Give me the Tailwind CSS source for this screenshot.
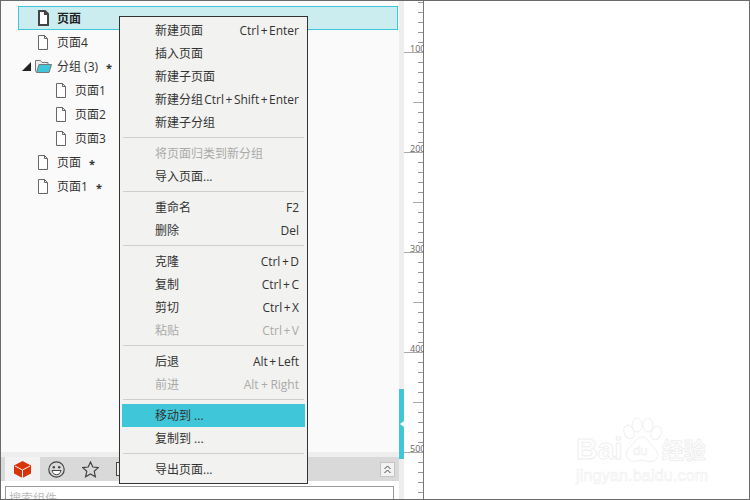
<!DOCTYPE html>
<html lang="zh">
<head>
<meta charset="utf-8">
<script src="https://cdn.jsdelivr.net/npm/@tailwindcss/browser@4"></script>
</head>
<body class="bg-white">
<div class="relative flex w-[750px] h-[500px] overflow-hidden bg-white border border-[#6a6a6a] text-[12px] leading-[18px] text-[#333] font-['Open_Sans','Noto_Sans_CJK_SC',sans-serif]">

  <!-- left panel -->
  <div class="flex flex-col w-[398px] shrink-0 h-full">
    <div class="flex-1 min-h-0 bg-[#fafafa] pt-[5px]">
      <div class="flex items-center h-6 ml-[17px] w-[380px] bg-[#cbedf0] border border-[#3fc6d8] pl-[19px] font-bold text-[#222]">
        <svg class="w-[11px] h-[16px] shrink-0" viewBox="0 0 11 16"><path d="M1 1h6l3 3v11H1z M7 1v3h3" fill="#fff" stroke="#444" stroke-width="2"/></svg>
        <span class="ml-[8px] pt-[2px]">页面</span>
      </div>
      <div class="flex items-center h-6 pl-[37px]">
        <svg class="w-[10px] h-[15px] shrink-0" viewBox="0 0 10 15"><path d="M.5.5h6l3 3v11H.5z M6.500.5v3h3" fill="#fff" stroke="#666"/></svg>
        <span class="ml-[9px] pt-[2px]">页面4</span>
      </div>
      <div class="flex items-center h-6 pl-[21px]">
        <svg class="w-[9px] h-[9px] shrink-0" viewBox="0 0 9 9"><path d="M9 0v9H0z" fill="#222"/></svg>
        <svg class="w-[17px] h-[14px] ml-[4px] shrink-0" viewBox="0 0 17 14"><path d="M.5 12.500V1.500h5l1.500 2h6v2" fill="#eee" stroke="#777"/><path d="M4 5.500h12.500l-2.500 8H1.500z" fill="#3fc6d8" stroke="#777"/></svg>
        <span class="ml-[5px] pt-[2px]">分组 (3)</span><span class="ml-[8px] pt-[3px] text-[11px] font-bold">*</span>
      </div>
      <div class="flex items-center h-6 pl-[55px]">
        <svg class="w-[10px] h-[15px] shrink-0" viewBox="0 0 10 15"><path d="M.5.5h6l3 3v11H.5z M6.500.5v3h3" fill="#fff" stroke="#666"/></svg>
        <span class="ml-[9px] pt-[2px]">页面1</span>
      </div>
      <div class="flex items-center h-6 pl-[55px]">
        <svg class="w-[10px] h-[15px] shrink-0" viewBox="0 0 10 15"><path d="M.5.5h6l3 3v11H.5z M6.500.5v3h3" fill="#fff" stroke="#666"/></svg>
        <span class="ml-[9px] pt-[2px]">页面2</span>
      </div>
      <div class="flex items-center h-6 pl-[55px]">
        <svg class="w-[10px] h-[15px] shrink-0" viewBox="0 0 10 15"><path d="M.5.5h6l3 3v11H.5z M6.500.5v3h3" fill="#fff" stroke="#666"/></svg>
        <span class="ml-[9px] pt-[2px]">页面3</span>
      </div>
      <div class="flex items-center h-6 pl-[37px]">
        <svg class="w-[10px] h-[15px] shrink-0" viewBox="0 0 10 15"><path d="M.5.5h6l3 3v11H.5z M6.500.5v3h3" fill="#fff" stroke="#666"/></svg>
        <span class="ml-[9px] pt-[2px]">页面</span><span class="ml-[8px] pt-[3px] text-[11px] font-bold">*</span>
      </div>
      <div class="flex items-center h-6 pl-[37px]">
        <svg class="w-[10px] h-[15px] shrink-0" viewBox="0 0 10 15"><path d="M.5.5h6l3 3v11H.5z M6.500.5v3h3" fill="#fff" stroke="#666"/></svg>
        <span class="ml-[9px] pt-[2px]">页面1</span><span class="ml-[8px] pt-[3px] text-[11px] font-bold">*</span>
      </div>
    </div>
    <div class="h-[5px] bg-[#eeeeee] shrink-0"></div>
    <div class="flex items-center h-6 bg-[#d9d9d9] pl-[4px] shrink-0">
      <div class="flex items-center justify-center w-[35px] h-6 bg-[#f2f2f2]">
        <svg class="w-[17px] h-[17px]" viewBox="0 0 17 17"><path d="M8.500 0 17 4.500v8L8.500 17 0 12.500v-8z" fill="#d8340a"/><path d="M1 5l7.500 4 7.500-4M8.500 9v8" fill="none" stroke="#f2f2f2" stroke-width="1"/></svg>
      </div>
      <div class="flex items-center justify-center w-[32px] h-6">
        <svg class="w-[17px] h-[17px]" viewBox="0 0 17 17"><circle cx="8.500" cy="8.500" r="7.700" fill="none" stroke="#444" stroke-width="1.200"/><circle cx="5.800" cy="6.200" r="1.200" fill="#444"/><circle cx="11.200" cy="6.200" r="1.200" fill="#444"/><path d="M4 9.500h9c-.5 3-2.500 4.200-4.500 4.200S4.500 12.500 4 9.500z" fill="#fff" stroke="#444"/></svg>
      </div>
      <div class="flex items-center justify-center w-[36px] h-6">
        <svg class="w-[17px] h-[17px]" viewBox="0 0 17 17"><path d="M8.500 1l2.300 5 5.500.6-4.100 3.700 1.200 5.400-4.900-2.800-4.900 2.800 1.200-5.400L.7 6.600 6.200 6z" fill="none" stroke="#444" stroke-width="1.200"/></svg>
      </div>
      <div class="w-[14px] h-[14px] ml-[8px] border border-[#444] bg-[#eee] shrink-0"></div>
      <div class="flex items-center justify-center w-[15px] h-[15px] ml-auto mr-[4px] bg-[#f2f2f2] border border-[#c4c4c4]">
        <svg class="w-[7px] h-[9px]" viewBox="0 0 7 9"><path d="M.5 4 3.500 1l3 3M.5 8l3-3 3 3" fill="none" stroke="#444"/></svg>
      </div>
    </div>
    <div class="flex-none h-[18px] bg-white pt-[5px] pl-[4px] pr-[5px]">
      <div class="h-[30px] border border-[#999] pl-[3px] pt-[3px] text-[#bbb] text-[12px]">搜索组件</div>
    </div>
  </div>

  <!-- splitter strip -->
  <div class="flex flex-col w-[5px] shrink-0 bg-[#eeeeee] pt-[388px]">
    <div class="flex items-center justify-end h-[70px] bg-[#3fc6d8]">
      <div class="w-0 h-0 border-y-[3px] border-y-transparent border-r-[4px] border-r-white"></div>
    </div>
  </div>

  <!-- ruler -->
  <svg class="w-[20px] h-[498px] shrink-0" viewBox="0 1 20 498">
    <defs>
      <pattern id="t" x="0" y="2" width="20" height="10" patternUnits="userSpaceOnUse"><rect x="14" y="0" width="5" height="1" fill="#999"/></pattern>
    </defs>
    <rect width="20" height="500" fill="url(#t)"/>
    <path d="M9 102.500h10M9 202.500h10M9 302.500h10M9 402.500h10" stroke="#aaa"/>
    <path d="M0 52.500h19M0 152.500h19M0 252.500h19M0 352.500h19M0 452.500h19" stroke="#aaa"/>
    <rect x="19" y="0" width="1" height="500" fill="#777"/>
    <g font-family="'Open Sans',sans-serif" font-size="9" fill="#666">
      <text x="6" y="51.500">100</text><text x="6" y="151.500">200</text><text x="6" y="251.500">300</text><text x="6" y="351.500">400</text><text x="6" y="451.500">500</text>
    </g>
  </svg>

  <!-- context menu -->
  <div class="absolute left-[118px] top-[15px] w-[189px] h-[468px] bg-[#f2f2f0] border border-[#333] py-[2px] text-[#333]">
    <div class="flex items-center justify-between h-[23px] pl-[35px] pr-[8px]"><span>新建页面</span><span>Ctrl<span class="mx-[1.5px]">+</span>Enter</span></div>
    <div class="flex items-center justify-between h-[23px] pl-[35px] pr-[8px]"><span>插入页面</span></div>
    <div class="flex items-center justify-between h-[23px] pl-[35px] pr-[8px]"><span>新建子页面</span></div>
    <div class="flex items-center justify-between h-[23px] pl-[35px] pr-[8px]"><span>新建分组</span><span>Ctrl<span class="mx-[1.5px]">+</span>Shift<span class="mx-[1.5px]">+</span>Enter</span></div>
    <div class="flex items-center justify-between h-[23px] pl-[35px] pr-[8px]"><span>新建子分组</span></div>
    <div class="h-[8px] pt-[3px] px-[3px]"><div class="h-px bg-[#cfcfcf]"></div></div>
    <div class="flex items-center justify-between h-[23px] pl-[35px] pr-[8px] text-[#aaa]"><span>将页面归类到新分组</span></div>
    <div class="flex items-center justify-between h-[23px] pl-[35px] pr-[8px]"><span>导入页面...</span></div>
    <div class="h-[8px] pt-[3px] px-[3px]"><div class="h-px bg-[#cfcfcf]"></div></div>
    <div class="flex items-center justify-between h-[23px] pl-[35px] pr-[8px]"><span>重命名</span><span>F2</span></div>
    <div class="flex items-center justify-between h-[23px] pl-[35px] pr-[8px]"><span>删除</span><span>Del</span></div>
    <div class="h-[8px] pt-[3px] px-[3px]"><div class="h-px bg-[#cfcfcf]"></div></div>
    <div class="flex items-center justify-between h-[23px] pl-[35px] pr-[8px]"><span>克隆</span><span>Ctrl<span class="mx-[1.5px]">+</span>D</span></div>
    <div class="flex items-center justify-between h-[23px] pl-[35px] pr-[8px]"><span>复制</span><span>Ctrl<span class="mx-[1.5px]">+</span>C</span></div>
    <div class="flex items-center justify-between h-[23px] pl-[35px] pr-[8px]"><span>剪切</span><span>Ctrl<span class="mx-[1.5px]">+</span>X</span></div>
    <div class="flex items-center justify-between h-[23px] pl-[35px] pr-[8px] text-[#aaa]"><span>粘贴</span><span>Ctrl<span class="mx-[1.5px]">+</span>V</span></div>
    <div class="h-[8px] pt-[3px] px-[3px]"><div class="h-px bg-[#cfcfcf]"></div></div>
    <div class="flex items-center justify-between h-[23px] pl-[35px] pr-[8px]"><span>后退</span><span>Alt<span class="mx-[1.5px]">+</span>Left</span></div>
    <div class="flex items-center justify-between h-[23px] pl-[35px] pr-[8px] text-[#aaa]"><span>前进</span><span>Alt<span class="mx-[2.5px]">+</span>Right</span></div>
    <div class="h-[8px] pt-[3px] px-[3px]"><div class="h-px bg-[#cfcfcf]"></div></div>
    <div class="flex items-center h-[23px] mx-[2px] pl-[33px] bg-[#3fc6d8]"><span>移动到 ...</span></div>
    <div class="flex items-center justify-between h-[23px] pl-[35px] pr-[8px]"><span>复制到 ...</span></div>
    <div class="h-[8px] pt-[3px] px-[3px]"><div class="h-px bg-[#cfcfcf]"></div></div>
    <div class="flex items-center justify-between h-[23px] pl-[35px] pr-[8px]"><span>导出页面...</span></div>
  </div>

  <!-- watermark -->
  <div class="absolute left-[575px] top-[419px] w-[136px] h-[66px] text-white [-webkit-text-stroke:1px_#efefef] font-['Liberation_Sans','Noto_Sans_CJK_SC',sans-serif]">
    <div class="flex items-end h-[44px]">
      <span class="text-[30px] leading-[30px] font-bold">Bai</span>
      <svg class="w-[40px] h-[46px] shrink-0 -ml-[1px]" viewBox="0 0 40 46" fill="#fff" stroke="#efefef">
        <ellipse cx="7" cy="14" rx="5" ry="7" transform="rotate(-20 7 14)"/><ellipse cx="15" cy="7" rx="5" ry="7"/><ellipse cx="26" cy="7" rx="5" ry="7"/><ellipse cx="34" cy="15" rx="5" ry="7" transform="rotate(20 34 15)"/>
        <path d="M20 19c-5 0-7 5-11 9-4 4-6 7-4 11s6 5 10 4 7-1 10 0 8 1 10-3 0-8-4-11c-4-4-6-10-11-10z"/>
        <text x="11" y="37" font-size="13" stroke-width=".6" font-family="'Liberation Sans',sans-serif">du</text>
      </svg>
      <span class="text-[22px] leading-[26px] font-bold">经验</span>
    </div>
    <div class="text-[16px] leading-[20px] mt-[2px] tracking-[.2px] [-webkit-text-stroke:.6px_#efefef]">jingyan.baidu.com</div>
  </div>
</div>
</body>
</html>
